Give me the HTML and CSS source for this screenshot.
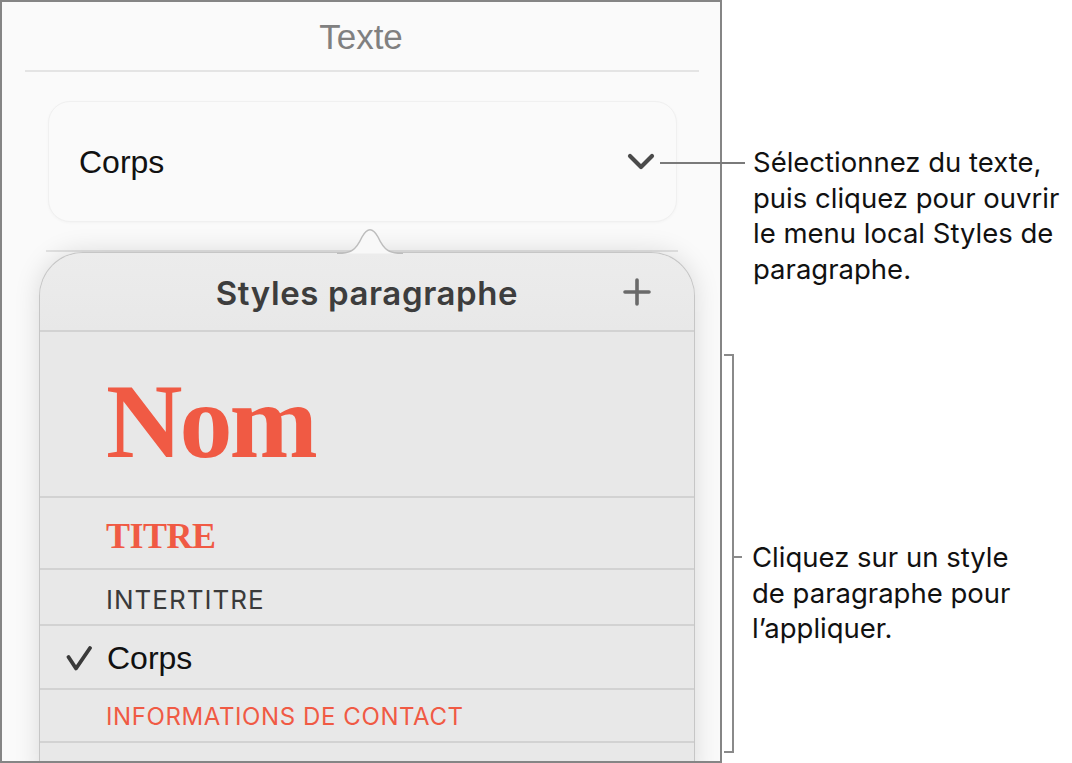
FILE: index.html
```html
<!DOCTYPE html>
<html lang="fr">
<head>
<meta charset="utf-8">
<title>Styles paragraphe</title>
<link rel="stylesheet" href="styles.css">
</head>
<body>
<div class="page">
  <div class="frame">
    <div class="panel-title">Texte</div>
    <div class="divider top-divider"></div>
    <div class="dropdown">
      <span class="dropdown-label">Corps</span>
      <svg class="chevron" width="28" height="18" viewBox="0 0 28 18"><path d="M3 3 L14 14 L25 3" fill="none" stroke="#4a4a4a" stroke-width="4.2" stroke-linecap="round" stroke-linejoin="round"/></svg>
    </div>
    <div class="divider mid-divider"></div>
    <div class="popover">
      <svg class="popover-arrow" width="66" height="30" viewBox="0 0 66 30"><path d="M0 29.5 C14 29.5 19 26 25 13 Q33 -1.5 41 13 C47 26 52 29.5 66 29.5" fill="#f8f8f8" stroke="#bdbdbd" stroke-width="1.5"/></svg>
      <div class="popover-header">
        <span></span>
        <span class="popover-title">Styles paragraphe</span>
        <svg class="plus" width="28" height="28" viewBox="0 0 28 28"><path d="M14 2 V26 M2 14 H26" fill="none" stroke="#6a6a6a" stroke-width="3.6" stroke-linecap="round"/></svg>
      </div>
      <div class="row row-nom"><span class="style-nom">Nom</span></div>
      <div class="row row-titre"><span class="style-titre">TITRE</span></div>
      <div class="row row-inter"><span class="style-inter">INTERTITRE</span></div>
      <div class="row row-corps row-checked">
        <svg class="check" width="26" height="25" viewBox="0 0 26 25"><path d="M2.5 11 L10 22.5 L24 2" fill="none" stroke="#3a3a3a" stroke-width="3.8" stroke-linecap="round" stroke-linejoin="round"/></svg>
        <span class="style-corps">Corps</span>
      </div>
      <div class="row row-info"><span class="style-info">INFORMATIONS DE CONTACT</span></div>
      <div class="row row-next"></div>
    </div>
  </div>
  <div class="notes">
    <p class="note note-one">Sélectionnez du texte,<br>puis cliquez pour ouvrir<br>le menu local Styles de<br>paragraphe.</p>
    <p class="note note-two">Cliquez sur un style<br>de paragraphe pour<br>l’appliquer.</p>
  </div>
  <div class="leader leader-one"></div>
  <div class="bracket"></div>
  <div class="leader bracket-tick"></div>
</div>
</body>
</html>
```

FILE: styles.css
```css
* { box-sizing: border-box; }
html, body { margin: 0; padding: 0; background: #ffffff; }
body { font-family: "Inter", "Liberation Sans", sans-serif; }

.page {
  position: relative;
  display: flex;
  width: 1072px;
  height: 763px;
  overflow: hidden;
}

.frame {
  flex: 0 0 722px;
  height: 763px;
  border: 2px solid #858585;
  background: #fafafa;
  overflow: hidden;
  display: flex;
  flex-direction: column;
}
.frame > * { flex-shrink: 0; }

.panel-title {
  height: 68px;
  display: flex;
  align-items: center;
  justify-content: center;
  padding-top: 2px;
  font-family: "Liberation Sans", Arial, sans-serif;
  font-size: 35px;
  color: #808080;
}

.divider {
  height: 2px;
  background: #e4e4e4;
}
.top-divider { margin: 0 21px 0 23px; }
.mid-divider { margin: 28px 42px 0 44px; background: #e2e2e2; }

.dropdown {
  margin: 29px 0 0 46px;
  width: 629px;
  height: 121px;
  border: 1px solid #f0f0f0;
  border-radius: 22px;
  background: #fafafa;
  box-shadow: 0 1px 3px rgba(0,0,0,0.03);
  display: flex;
  align-items: center;
  justify-content: space-between;
  padding: 2px 21px 0 30px;
}
.dropdown-label {
  font-family: "Liberation Sans", Arial, sans-serif;
  font-size: 32px;
  color: #111111;
}
.chevron { margin-top: -2px; }

.popover {
  position: relative;
  margin: 0 0 0 37px;
  width: 656px;
  flex: 1 0 auto;
  background: #e8e8e8;
  border: 1.5px solid #c6c6c6;
  border-bottom: none;
  border-radius: 44px 44px 0 0;
  box-shadow: 0 0 26px rgba(0,0,0,0.13);
}
.popover-arrow {
  position: absolute;
  top: -29px;
  left: 297px;
}

.popover-header {
  height: 79px;
  display: grid;
  grid-template-columns: 1fr auto 1fr;
  align-items: center;
  padding: 3px 43px 0 43px;
  border-bottom: 2px solid #d2d2d2;
  background: linear-gradient(#ececec, #e8e8e8);
  border-radius: 44px 44px 0 0;
}
.popover-title {
  font-family: "Inter", "Liberation Sans", sans-serif;
  font-weight: 600;
  font-size: 33px;
  letter-spacing: 0.6px;
  color: #3d3d3d;
}
.plus { justify-self: end; margin-top: -2px; }

.row {
  display: flex;
  align-items: center;
  padding-left: 66px;
  border-bottom: 2px solid #d2d2d2;
}
.row-nom { height: 166px; padding-top: 16px; }
.row-titre { height: 72px; padding-top: 6px; }
.row-inter { height: 56px; padding-top: 4px; }
.row-corps { height: 64px; padding-top: 2px; }
.row-info { height: 53px; padding-top: 2px; }
.row-next { height: 40px; border-bottom: none; }
.row-checked { padding-left: 26px; }
.check { margin-right: 15px; }

.style-nom {
  font-family: "Liberation Serif", "Times New Roman", serif;
  font-weight: bold;
  font-size: 106px;
  line-height: 1;
  color: #f05a44;
  letter-spacing: -3px;
}
.style-titre {
  font-family: "Liberation Serif", "Times New Roman", serif;
  font-weight: bold;
  font-size: 36px;
  line-height: 1;
  color: #f05a44;
  letter-spacing: -0.5px;
}
.style-inter {
  font-family: "Inter", "Liberation Sans", sans-serif;
  font-size: 26px;
  letter-spacing: 1px;
  color: #3a3a3a;
}
.style-corps {
  font-family: "Liberation Sans", Arial, sans-serif;
  font-size: 32px;
  color: #111111;
}
.style-info {
  font-family: "Inter", "Liberation Sans", sans-serif;
  font-size: 24px;
  letter-spacing: 0.6px;
  color: #f05a44;
}

.notes {
  flex: 1 1 auto;
  padding-left: 31px;
  display: flex;
  flex-direction: column;
}
.note {
  margin: 0;
  font-family: "Inter", "Liberation Sans", sans-serif;
  font-size: 27.5px;
  line-height: 35.5px;
  color: #111111;
}
.note-one { margin-top: 145px; }
.note-two { margin-top: 253px; margin-left: -1px; }

.leader {
  position: absolute;
  height: 2px;
  background: #7a7a7a;
}
.leader-one { left: 660px; top: 162px; width: 85px; }
.bracket {
  position: absolute;
  left: 724px;
  top: 354px;
  width: 10px;
  height: 399px;
  border: 2px solid #8a8a8a;
  border-left: none;
}
.bracket-tick { left: 734px; top: 556px; width: 8px; background: #8a8a8a; }
```
